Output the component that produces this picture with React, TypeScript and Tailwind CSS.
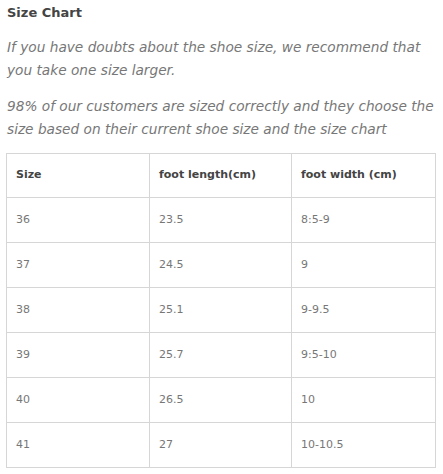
const rows = [
  ['36', '23.5', '8:5-9'],
  ['37', '24.5', '9'],
  ['38', '25.1', '9-9.5'],
  ['39', '25.7', '9:5-10'],
  ['40', '26.5', '10'],
  ['41', '27', '10-10.5'],
];

export default function App() {
  return (
    <div className="bg-white w-[443px] h-[474px] px-[6px] pt-[4px] text-[#777] font-['DejaVu_Sans',sans-serif]">
      <h3 className="text-[13px] font-bold text-[#444] leading-[18px] pl-[1px]">Size Chart</h3>
      <p className="mt-[14px] text-[13.7px] italic leading-[23px] pl-[1px]">
        If you have doubts about the shoe size, we recommend that you take one size larger.
      </p>
      <p className="mt-[13px] text-[13.7px] italic leading-[23px] pl-[1px]">
        98% of our customers are sized correctly and they choose the size based on their current shoe size and the size chart
      </p>
      <table className="mt-[12px] w-[430px] border-collapse table-fixed text-[11px]">
        <thead>
          <tr className="h-[44px]">
            <th className="w-[143px] border border-[#d6d6d6] px-[9px] text-left font-bold text-[#444]">Size</th>
            <th className="w-[142px] border border-[#d6d6d6] px-[9px] text-left font-bold text-[#444]">foot length(cm)</th>
            <th className="border border-[#d6d6d6] px-[9px] text-left font-bold text-[#444]">foot width (cm)</th>
          </tr>
        </thead>
        <tbody>
          {rows.map((r) => (
            <tr key={r[0]} className="h-[45px]">
              {r.map((c, i) => (
                <td key={i} className="border border-[#d6d6d6] px-[9px] text-[#777]">{c}</td>
              ))}
            </tr>
          ))}
        </tbody>
      </table>
    </div>
  );
}
